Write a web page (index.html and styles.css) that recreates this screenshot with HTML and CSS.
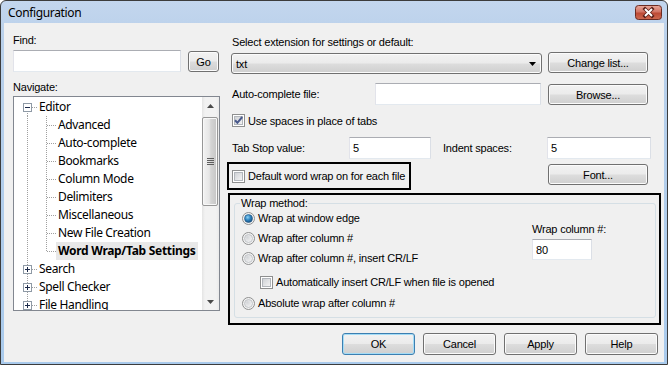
FILE: index.html
```html
<!DOCTYPE html>
<html lang="en">
<head>
    <meta charset="UTF-8">
    <title>Configuration</title>
    <link rel="stylesheet" href="styles.css">
</head>
<body>

<svg class="svg-defs" width="0" height="0">
    <defs>
        <linearGradient id="closeGrad" x1="0" y1="0" x2="0" y2="1">
            <stop offset="0" stop-color="#e9a99b"/>
            <stop offset="0.45" stop-color="#d27464"/>
            <stop offset="0.55" stop-color="#bd4a35"/>
            <stop offset="1" stop-color="#cf6a50"/>
        </linearGradient>
        <linearGradient id="boxGrad" x1="0" y1="0" x2="1" y2="1">
            <stop offset="0" stop-color="#cdd0d4"/>
            <stop offset="1" stop-color="#f5f5f5"/>
        </linearGradient>
        <radialGradient id="radioGrad" cx="0.35" cy="0.35" r="0.8">
            <stop offset="0" stop-color="#d3d5d8"/>
            <stop offset="1" stop-color="#f8f8f8"/>
        </radialGradient>
        <radialGradient id="dotGrad" cx="0.4" cy="0.35" r="0.7">
            <stop offset="0" stop-color="#8fd3f5"/>
            <stop offset="0.5" stop-color="#2d83c0"/>
            <stop offset="1" stop-color="#174d7c"/>
        </radialGradient>
    </defs>
</svg>

<div class="window">
    <div class="titlebar">
        <span class="title">Configuration</span>
        <span class="close-btn">
            <svg width="27" height="15" viewBox="0 0 27 15">
                <rect x="0.5" y="0.5" width="26" height="14" rx="3" fill="url(#closeGrad)" stroke="#6b2b22"/>
                <path d="M10 4 L17 11 M17 4 L10 11" stroke="#5d2018" stroke-width="3.6" stroke-linecap="square"/>
                <path d="M10 4 L17 11 M17 4 L10 11" stroke="#fff" stroke-width="2"/>
            </svg>
        </span>
    </div>

    <div class="client">
        <div class="main">
            <!-- left: find + navigation tree -->
            <div class="left-col">
                <div class="lbl">Find:</div>
                <div class="find-row">
                    <input class="textbox find-box" type="text" value="">
                    <button class="btn go-btn">Go</button>
                </div>
                <div class="lbl nav-lbl">Navigate:</div>
                <div class="tree">
                    <div class="tree-list">
                        <div class="node">
                            <span class="ind root-ind first"><svg class="expander" width="9" height="9" viewBox="0 0 9 9"><rect x="0.5" y="0.5" width="8" height="8" fill="#fff" stroke="#8f9aa6"/><path d="M2 4.5h5" stroke="#1c2a4a"/></svg></span>
                            <span class="node-text">Editor</span>
                        </div>
                        <div class="node"><span class="ind pass"></span><span class="ind2"></span><span class="node-text">Advanced</span></div>
                        <div class="node"><span class="ind pass"></span><span class="ind2"></span><span class="node-text">Auto-complete</span></div>
                        <div class="node"><span class="ind pass"></span><span class="ind2"></span><span class="node-text">Bookmarks</span></div>
                        <div class="node"><span class="ind pass"></span><span class="ind2"></span><span class="node-text">Column Mode</span></div>
                        <div class="node"><span class="ind pass"></span><span class="ind2"></span><span class="node-text">Delimiters</span></div>
                        <div class="node"><span class="ind pass"></span><span class="ind2"></span><span class="node-text">Miscellaneous</span></div>
                        <div class="node"><span class="ind pass"></span><span class="ind2"></span><span class="node-text">New File Creation</span></div>
                        <div class="node"><span class="ind pass"></span><span class="ind2 end"></span><span class="node-text selected">Word Wrap/Tab Settings</span></div>
                        <div class="node">
                            <span class="ind root-ind"><svg class="expander" width="9" height="9" viewBox="0 0 9 9"><rect x="0.5" y="0.5" width="8" height="8" fill="#fff" stroke="#8f9aa6"/><path d="M2 4.5h5M4.5 2v5" stroke="#1c2a4a"/></svg></span>
                            <span class="node-text">Search</span>
                        </div>
                        <div class="node">
                            <span class="ind root-ind"><svg class="expander" width="9" height="9" viewBox="0 0 9 9"><rect x="0.5" y="0.5" width="8" height="8" fill="#fff" stroke="#8f9aa6"/><path d="M2 4.5h5M4.5 2v5" stroke="#1c2a4a"/></svg></span>
                            <span class="node-text">Spell Checker</span>
                        </div>
                        <div class="node">
                            <span class="ind root-ind"><svg class="expander" width="9" height="9" viewBox="0 0 9 9"><rect x="0.5" y="0.5" width="8" height="8" fill="#fff" stroke="#8f9aa6"/><path d="M2 4.5h5M4.5 2v5" stroke="#1c2a4a"/></svg></span>
                            <span class="node-text">File Handling</span>
                        </div>
                    </div>
                    <div class="vscroll">
                        <div class="sb-arrow"><svg width="7" height="4" viewBox="0 0 7 4"><path d="M0 4 L3.5 0 L7 4Z" fill="#4a4a4a"/></svg></div>
                        <div class="sb-thumb">
                            <svg width="7" height="7" viewBox="0 0 7 7"><path d="M0 0.5h7M0 2.5h7M0 4.5h7M0 6.5h7" stroke="#5e5e5e"/></svg>
                        </div>
                        <div class="sb-space"></div>
                        <div class="sb-arrow"><svg width="7" height="4" viewBox="0 0 7 4"><path d="M0 0 L7 0 L3.5 4Z" fill="#4a4a4a"/></svg></div>
                    </div>
                </div>
            </div>

            <!-- right: settings for the selected page -->
            <div class="right-col">
                <div class="lbl r-lbl">Select extension for settings or default:</div>
                <div class="row row-ext">
                    <div class="combo">
                        <span>txt</span>
                        <svg width="7" height="4" viewBox="0 0 7 4"><path d="M0 0 L7 0 L3.5 4Z" fill="#000"/></svg>
                    </div>
                    <button class="btn wide-btn change-btn">Change list...</button>
                </div>
                <div class="row row-auto">
                    <span class="field-lbl auto-lbl">Auto-complete file:</span>
                    <input class="textbox auto-box" type="text" value="">
                    <button class="btn wide-btn browse-btn">Browse...</button>
                </div>
                <div class="row row-check">
                    <svg class="check" width="13" height="13" viewBox="0 0 13 13">
                        <rect x="0.5" y="0.5" width="12" height="12" fill="#fff" stroke="#8e8f8f"/>
                        <rect x="2.5" y="2.5" width="8" height="8" fill="url(#boxGrad)" stroke="#b2b6bb"/>
                        <path d="M3 6.2 L5.4 8.8 L10.2 3" fill="none" stroke="#4a5a8c" stroke-width="2"/>
                    </svg>
                    <span class="check-text">Use spaces in place of tabs</span>
                </div>
                <div class="row row-tab">
                    <span class="field-lbl tab-lbl">Tab Stop value:</span>
                    <input class="textbox tab-box" type="text" value="5">
                    <span class="field-lbl indent-lbl">Indent spaces:</span>
                    <input class="textbox indent-box" type="text" value="5">
                </div>
                <div class="row row-wrap">
                    <div class="mark-box">
                        <svg class="check" width="13" height="13" viewBox="0 0 13 13">
                            <rect x="0.5" y="0.5" width="12" height="12" fill="#fff" stroke="#8e8f8f"/>
                            <rect x="2.5" y="2.5" width="8" height="8" fill="url(#boxGrad)" stroke="#b2b6bb"/>
                        </svg>
                        <span class="check-text">Default word wrap on for each file</span>
                    </div>
                    <button class="btn wide-btn font-btn">Font...</button>
                </div>
                <div class="mark-group">
                    <fieldset class="wrap-method">
                        <legend>Wrap method:</legend>
                        <div class="wrap-body">
                            <div class="wrap-options">
                                <div class="opt">
                                    <svg width="13" height="13" viewBox="0 0 13 13"><circle cx="6.5" cy="6.5" r="6" fill="#f3f3f3" stroke="#8e8f8f"/><circle cx="6.5" cy="6.5" r="4" fill="url(#dotGrad)" stroke="#26567f" stroke-width="0.6"/></svg>
                                    <span class="opt-text">Wrap at window edge</span>
                                </div>
                                <div class="opt opt-gap">
                                    <svg width="13" height="13" viewBox="0 0 13 13"><circle cx="6.5" cy="6.5" r="6" fill="#f3f3f3" stroke="#8e8f8f"/><circle cx="6.5" cy="6.5" r="4" fill="url(#radioGrad)" stroke="#b8bbbf" stroke-width="0.8"/></svg>
                                    <span class="opt-text">Wrap after column #</span>
                                </div>
                                <div class="opt opt-gap">
                                    <svg width="13" height="13" viewBox="0 0 13 13"><circle cx="6.5" cy="6.5" r="6" fill="#f3f3f3" stroke="#8e8f8f"/><circle cx="6.5" cy="6.5" r="4" fill="url(#radioGrad)" stroke="#b8bbbf" stroke-width="0.8"/></svg>
                                    <span class="opt-text">Wrap after column #, insert CR/LF</span>
                                </div>
                                <div class="opt opt-sub">
                                    <svg width="13" height="13" viewBox="0 0 13 13">
                                        <rect x="0.5" y="0.5" width="12" height="12" fill="#fff" stroke="#8e8f8f"/>
                                        <rect x="2.5" y="2.5" width="8" height="8" fill="url(#boxGrad)" stroke="#b2b6bb"/>
                                    </svg>
                                    <span class="opt-text">Automatically insert CR/LF when file is opened</span>
                                </div>
                                <div class="opt opt-last">
                                    <svg width="13" height="13" viewBox="0 0 13 13"><circle cx="6.5" cy="6.5" r="6" fill="#f3f3f3" stroke="#8e8f8f"/><circle cx="6.5" cy="6.5" r="4" fill="url(#radioGrad)" stroke="#b8bbbf" stroke-width="0.8"/></svg>
                                    <span class="opt-text">Absolute wrap after column #</span>
                                </div>
                            </div>
                            <div class="wrap-col">
                                <div class="lbl">Wrap column #:</div>
                                <input class="textbox col-box" type="text" value="80">
                            </div>
                        </div>
                    </fieldset>
                </div>
            </div>
        </div>

        <div class="footer">
            <button class="btn foot-btn default-btn">OK</button>
            <button class="btn foot-btn">Cancel</button>
            <button class="btn foot-btn">Apply</button>
            <button class="btn foot-btn">Help</button>
        </div>
    </div>
</div>

</body>
</html>
```

FILE: styles.css
```css
* {
    box-sizing: border-box;
}
body {
    margin: 0;
    font-family: "Liberation Sans", Arial, sans-serif;
    font-size: 11px;
    letter-spacing: -0.2px;
    color: #000;
    background: #fff;
}
.svg-defs {
    display: block;
    width: 0;
    height: 0;
    overflow: hidden;
}

/* window frame */
.window {
    width: 668px;
    height: 365px;
    border: 1px solid #3c3c3c;
    border-radius: 6px 6px 0 0;
    background: linear-gradient(#c3d6ee, #b9d0ea 40px, #a9caec);
    padding: 0 3px 2px;
    display: flex;
    flex-direction: column;
}
.titlebar {
    height: 22px;
    flex: none;
    display: flex;
    align-items: center;
    padding-left: 4px;
    padding-right: 2px;
}
.title {
    flex: 1;
    font-family: "Noto Sans", sans-serif;
    font-size: 12px;
    letter-spacing: -0.35px;
}
.close-btn {
    display: flex;
}
.client {
    flex: 1;
    background: #f0f0f0;
    display: flex;
    flex-direction: column;
}
.main {
    display: flex;
    padding-top: 11px;
}

/* common controls */
.lbl {
    height: 13px;
    line-height: 13px;
    white-space: nowrap;
}
.textbox {
    display: block;
    margin: 0;
    height: 22px;
    padding: 0 3px;
    border: 1px solid;
    border-color: #abadb3 #dbdfe6 #e3e9ef #e2e3ea;
    background: #fff;
    font-family: "Liberation Sans", Arial, sans-serif;
    font-size: 11px;
    color: #000;
    outline: none;
}
.btn {
    display: block;
    margin: 0;
    padding: 0;
    height: 21px;
    border: 1px solid #707070;
    border-radius: 3px;
    background: linear-gradient(#f2f2f2, #ebebeb 49%, #dddddd 51%, #cfcfcf);
    box-shadow: inset 0 0 0 1px #fbfbfb;
    font-family: "Liberation Sans", Arial, sans-serif;
    font-size: 11px;
    letter-spacing: -0.2px;
    color: #000;
}

/* left column */
.left-col {
    margin-left: 9px;
    width: 207px;
    flex: none;
}
.find-row {
    display: flex;
    align-items: flex-start;
    margin-top: 3px;
}
.find-box {
    width: 168px;
}
.go-btn {
    width: 31px;
    margin-left: 7px;
    margin-top: 1px;
}
.nav-lbl {
    margin-top: 9px;
}
.tree {
    margin-top: 2px;
    width: 207px;
    height: 215px;
    border: 1px solid #828790;
    background: #fff;
    display: flex;
}
.tree-list {
    flex: 1;
    overflow: hidden;
    padding-top: 1px;
    font-family: "Noto Sans", sans-serif;
    font-size: 12px;
    letter-spacing: -0.35px;
}
.node {
    display: flex;
    align-items: flex-start;
    height: 18px;
}
.ind {
    width: 23px;
    height: 18px;
    flex: none;
}
.ind.pass {
    background: repeating-linear-gradient(#a0a0a0 0 1px, transparent 1px 2px) 13px 0 / 1px 100% no-repeat;
}
.ind.root-ind {
    background:
        repeating-linear-gradient(to right, #a0a0a0 0 1px, transparent 1px 2px) 14px 9px / 9px 1px no-repeat,
        repeating-linear-gradient(#a0a0a0 0 1px, transparent 1px 2px) 13px 0 / 1px 100% no-repeat;
}
.ind.root-ind.first {
    background:
        repeating-linear-gradient(to right, #a0a0a0 0 1px, transparent 1px 2px) 14px 9px / 9px 1px no-repeat,
        repeating-linear-gradient(#a0a0a0 0 1px, transparent 1px 2px) 13px 9px / 1px 9px no-repeat;
}
.expander {
    display: block;
    margin: 5px 0 0 9px;
}
.ind2 {
    width: 19px;
    height: 18px;
    flex: none;
    background:
        repeating-linear-gradient(to right, #a0a0a0 0 1px, transparent 1px 2px) 10px 9px / 9px 1px no-repeat,
        repeating-linear-gradient(#a0a0a0 0 1px, transparent 1px 2px) 9px 0 / 1px 100% no-repeat;
}
.ind2.end {
    background:
        repeating-linear-gradient(to right, #a0a0a0 0 1px, transparent 1px 2px) 10px 9px / 9px 1px no-repeat,
        repeating-linear-gradient(#a0a0a0 0 1px, transparent 1px 2px) 9px 0 / 1px 10px no-repeat;
}
.node-text {
    line-height: 18px;
    padding: 0 2px;
    white-space: nowrap;
}
.node-text.selected {
    background: #e8e8e8;
    font-weight: bold;
    letter-spacing: -0.3px;
}
.vscroll {
    width: 17px;
    flex: none;
    display: flex;
    flex-direction: column;
    background: linear-gradient(to right, #e4e4e4, #f2f2f2 3px, #f2f2f2 14px, #eaeaea);
}
.sb-arrow {
    height: 17px;
    flex: none;
    display: flex;
    align-items: center;
    justify-content: center;
}
.sb-arrow svg {
    display: block;
}
.sb-thumb {
    margin: 3px 1px 0 0;
    height: 89px;
    border: 1px solid #979797;
    border-radius: 2px;
    background: linear-gradient(to right, #f3f3f3, #e6e6e6 45%, #d5d5d5 55%, #c5c5c5);
    box-shadow: inset 0 0 0 1px #f8f8f8;
    display: flex;
    align-items: center;
    justify-content: center;
}
.sb-space {
    flex: 1;
}

/* right column */
.right-col {
    margin-left: 7px;
    width: 434px;
    flex: none;
    padding-top: 2px;
}
.r-lbl {
    margin-left: 5px;
}
.row {
    display: flex;
    align-items: flex-start;
}
.row-ext {
    margin-top: 3px;
    height: 22px;
}
.combo {
    margin-left: 4px;
    margin-top: 1px;
    width: 311px;
    height: 21px;
    border: 1px solid #707070;
    border-radius: 3px;
    background: linear-gradient(#f2f2f2, #ebebeb 49%, #dddddd 51%, #cfcfcf);
    box-shadow: inset 0 0 0 1px #fbfbfb;
    display: flex;
    align-items: center;
    justify-content: space-between;
    padding: 0 5px 0 4px;
}
.combo svg {
    display: block;
}
.wide-btn {
    width: 100px;
}
.change-btn {
    margin-left: 6px;
}
.row-auto {
    margin-top: 9px;
    height: 22px;
}
.field-lbl {
    line-height: 22px;
    margin-left: 5px;
    white-space: nowrap;
}
.auto-lbl {
    width: 143px;
}
.auto-box {
    width: 166px;
}
.browse-btn {
    margin-left: 7px;
    margin-top: 1px;
}
.row-check {
    margin-top: 9px;
    margin-left: 5px;
    height: 13px;
    align-items: center;
}
.check {
    display: block;
    flex: none;
}
.check-text {
    margin-left: 3px;
    white-space: nowrap;
}
.row-tab {
    margin-top: 10px;
    height: 22px;
}
.tab-lbl {
    width: 117px;
}
.tab-box {
    width: 82px;
}
.indent-lbl {
    margin-left: 12px;
    width: 104px;
}
.indent-box {
    width: 104px;
}
.row-wrap {
    margin-top: 3px;
}
.mark-box {
    width: 184px;
    height: 28px;
    border: 2px solid #000;
    padding-left: 3px;
    display: flex;
    align-items: center;
}
.font-btn {
    margin-left: 137px;
    margin-top: 2px;
}
.mark-group {
    margin-top: 3px;
    margin-left: 1px;
    width: 433px;
    height: 132px;
    border: 2px solid #000;
    padding: 0 3px 0 4px;
}
.wrap-method {
    margin: 2px 0 0;
    border: 1px solid #d5dfe5;
    border-radius: 3px;
    padding: 0 0 6px 7px;
    min-width: 0;
}
.wrap-method legend {
    padding: 0 1px;
    margin-left: -2px;
    line-height: 13px;
}
.wrap-body {
    display: flex;
}
.wrap-options {
    width: 290px;
}
.opt {
    display: flex;
    align-items: center;
    height: 16px;
}
.opt svg {
    display: block;
    flex: none;
}
.opt-text {
    margin-left: 3px;
    white-space: nowrap;
}
.opt-gap {
    margin-top: 4px;
}
.opt-sub {
    margin-top: 8px;
    margin-left: 18px;
}
.opt-last {
    margin-top: 5px;
}
.wrap-col {
    padding-top: 13px;
}
.col-box {
    margin-top: 3px;
    width: 60px;
    height: 21px;
}

/* dialog buttons */
.footer {
    display: flex;
    justify-content: flex-end;
    gap: 8px;
    margin-top: 8px;
    padding-right: 6px;
}
.foot-btn {
    width: 73px;
    height: 22px;
}
.default-btn {
    border-color: #3c7fb1;
    box-shadow: inset 0 0 0 1px #a4dcf6;
}
```
